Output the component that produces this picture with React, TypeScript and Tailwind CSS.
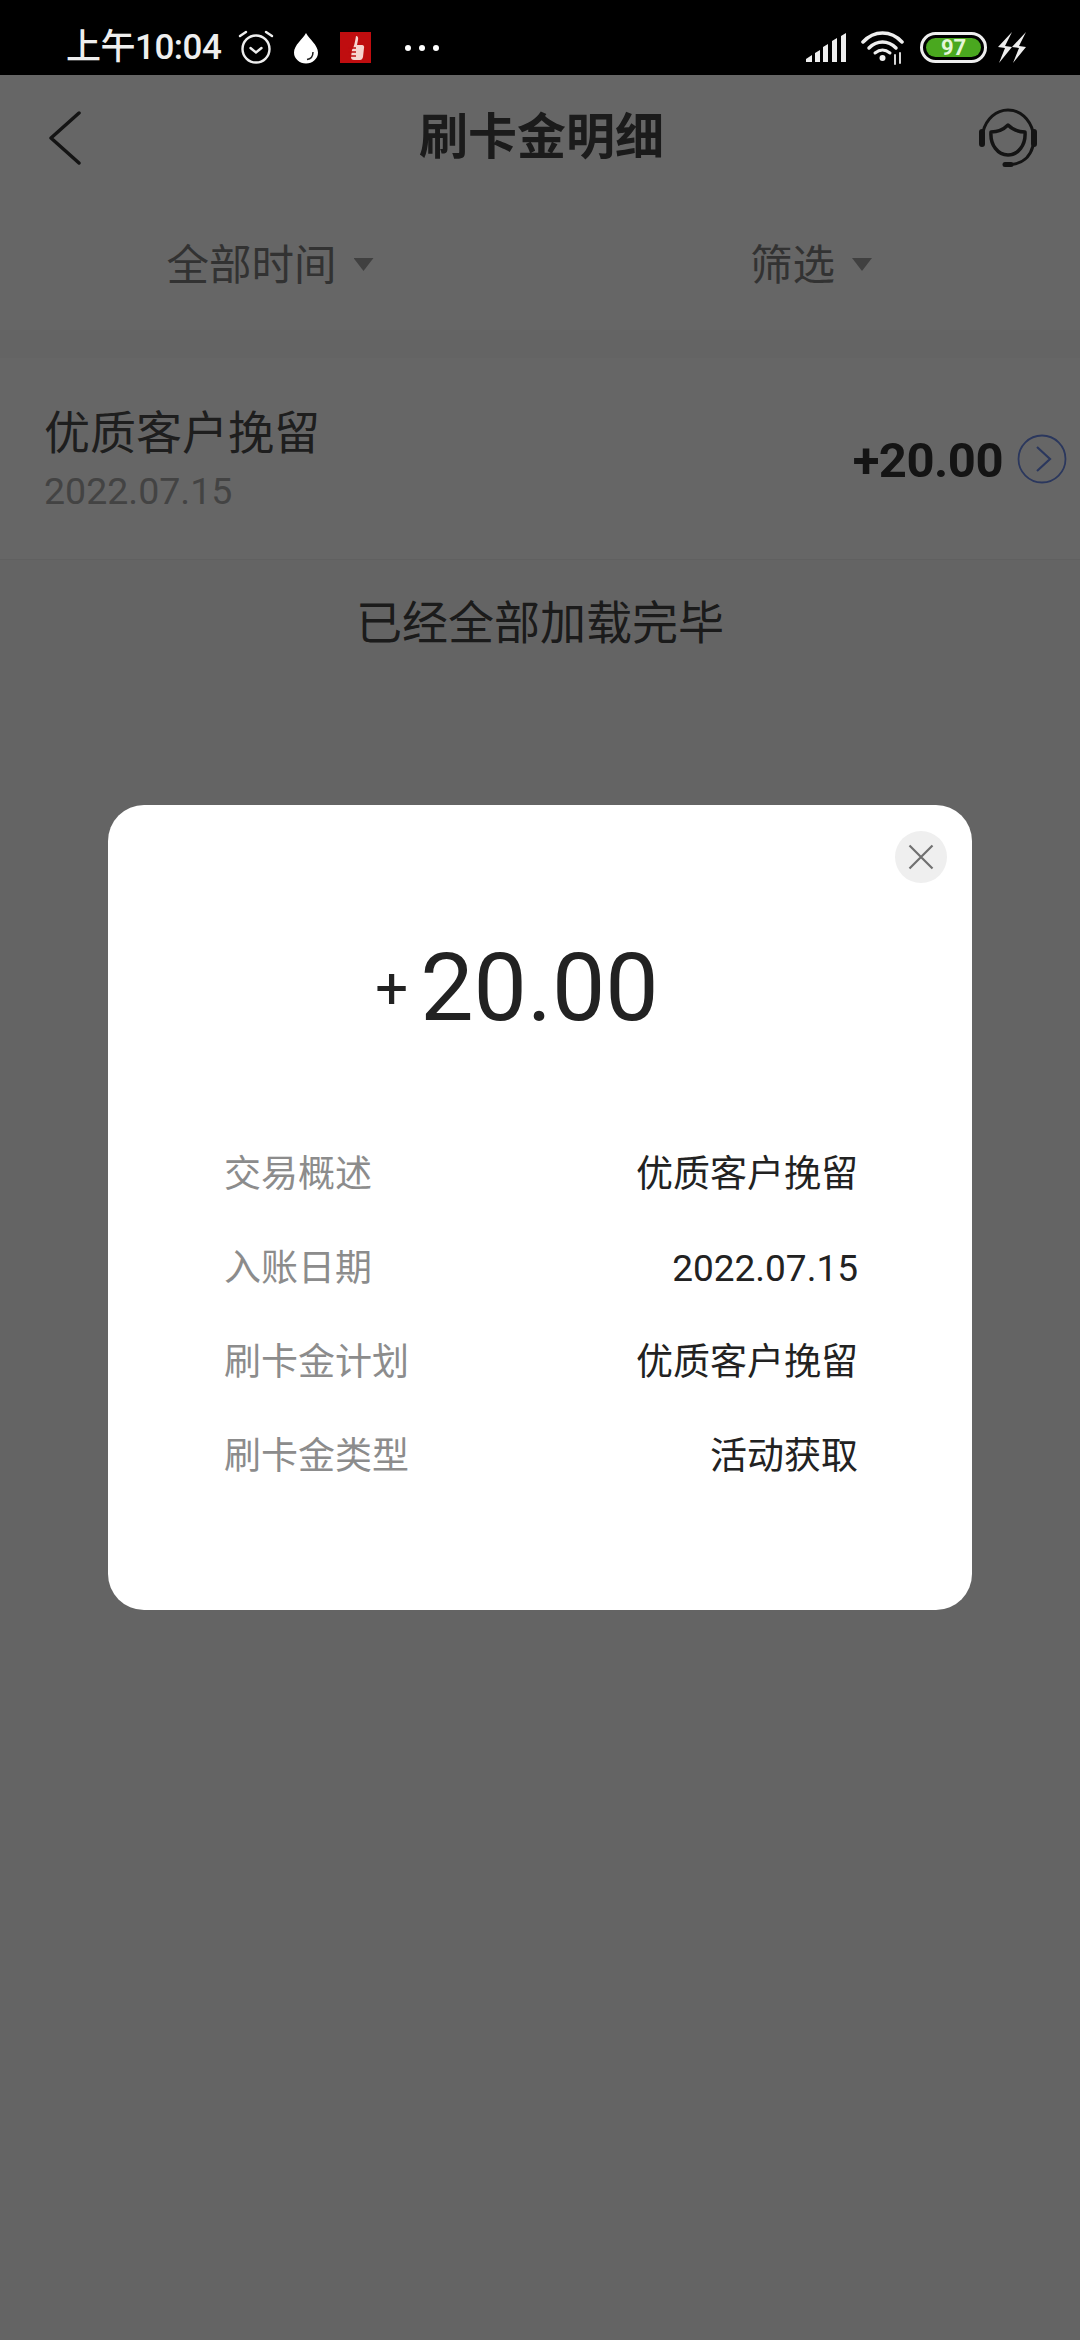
const cjk = "font-['Roboto','Noto_Sans_CJK_SC',sans-serif]";

function StatusBar() {
  return (
    <div className="h-[75px] shrink-0 bg-black flex items-center pt-[20px] relative z-10 text-[#eeeeee]">
      <span className="ml-[66px] w-[158px] text-[35px] leading-[40px] font-medium tracking-[-0.5px] whitespace-nowrap">上午10:04</span>
      <svg className="ml-[14px] mt-[-2px]" width="36" height="36" viewBox="0 0 36 36" fill="none" stroke="#eee" strokeWidth="2.4">
        <circle cx="18" cy="20" r="13.5" />
        <path d="M12.5 19l5.5 4.5 5.5-4.5" strokeLinecap="round" />
        <path d="M2 7l6-4M34 7l-6-4" strokeLinecap="round" />
      </svg>
      <svg className="ml-[19px]" width="26" height="32" viewBox="0 0 26 32">
        <path d="M13 1C16 7 25 13 25 20.500A12 11 0 0 1 1 20.500C1 13 10 7 13 1Z" fill="#fff" />
        <path d="M20 20c0 4-2 7-6 7.500" fill="none" stroke="#222" strokeWidth="1.500" />
      </svg>
      <div className="ml-[21px] w-[31px] h-[31px] bg-[#bf0d0f] flex items-center justify-center">
        <svg width="20" height="26" viewBox="0 0 20 26" fill="#f6d5d0">
          <path d="M10 1c2 0 2.500 2 2 4l-1 5h5c2 0 2.500 2 2 3l-1 9c-.5 2-1.500 3-3 3H8c-2 0-3-1-3-3l1-7c2-3 3-8 4-14Z" />
          <path d="M2 13h8M2 17h8M3 21h7" stroke="#bf0d0f" strokeWidth="1.500" />
        </svg>
      </div>
      <div className="ml-[34px] flex gap-[8px]">
        <div className="w-[6px] h-[6px] rounded-full bg-white" />
        <div className="w-[6px] h-[6px] rounded-full bg-white" />
        <div className="w-[6px] h-[6px] rounded-full bg-white" />
      </div>
      <div className="flex-1" />
      <svg width="42" height="30" viewBox="0 0 42 30" fill="#eee">
        <path d="M1 29v-3l6-4v7zM10 29V20l5-3v12zM18 29V14l5-3v18zM27 29V8l5-3v24zM36 29V3l5-3v29z" />
      </svg>
      <svg className="ml-[14px]" width="44" height="34" viewBox="0 0 44 34" fill="none" stroke="#eee" strokeLinecap="round">
        <path d="M2 11C13 -1 30 -1 41 11" strokeWidth="3.500" />
        <path d="M8 17c8-8 19-8 27 0" strokeWidth="3.500" />
        <path d="M14 22c5-4 10-4 15 0" strokeWidth="3" />
        <circle cx="21.500" cy="27" r="3" fill="#eee" stroke="none" />
        <path d="M34 24v9M39 22v10" strokeWidth="1.800" />
      </svg>
      <div className="ml-[15px] w-[67px] h-[31px] rounded-full border-[3px] border-[#eeeeee] p-[3px] flex">
        <div className="flex-1 rounded-full bg-[#4aa81f] flex items-center justify-center text-[#e4f5d8] text-[22px] leading-none font-bold">97</div>
      </div>
      <svg className="ml-[10px] mr-[53px]" width="30" height="31" viewBox="0 0 30 31" fill="#eee">
        <path d="M15 0L1 15l7 1-6 15 13-16-7-1zM29 0L15 15l7 1-6 15 13-16-7-1z" />
      </svg>
    </div>
  );
}

function Caret() {
  return <div className="w-[20px] h-[13px] ml-[17px] mb-[2px] bg-[#a0a0a0] [clip-path:polygon(0_0,100%_0,50%_100%)]" />;
}

function Header() {
  return (
    <div className="bg-white">
      <div className="h-[126px] grid grid-cols-[1fr_auto_1fr] items-center pl-[49px] pr-[42px]">
        <svg width="32" height="54" viewBox="0 0 32 54" fill="none" stroke="#333" strokeWidth="3.500" strokeLinecap="round" strokeLinejoin="round">
          <path d="M30 2L2 27l28 25" />
        </svg>
        <h1 className="text-[49px] leading-[60px] font-bold text-[#444444] ml-[-4px]">刷卡金明细</h1>
        <svg className="justify-self-end" width="60" height="60" viewBox="0 0 60 60" fill="none" stroke="#333" strokeWidth="3" strokeLinecap="round" strokeLinejoin="round">
          <path d="M5 24C8 11 18 2 30 2s22 9 25 22" />
          <path d="M13 24c7 0 12-2 17-7 5 5 10 7 17 7 1 13-7 23-17 23S12 37 13 24Z" strokeWidth="3.500" />
          <path d="M4 24v12M56 24v12" strokeWidth="6" />
          <path d="M55 38c-3 11-11 18-22 18.500" />
          <path d="M27 56.500h6" strokeWidth="5" />
        </svg>
      </div>
      <div className="h-[129px] flex text-[42.500px] text-[#7e7e7e]">
        <div className="w-1/2 flex items-center justify-center"><span>全部时间</span><Caret /></div>
        <div className="w-1/2 flex items-center justify-center pl-[2px]"><span>筛选</span><Caret /></div>
      </div>
    </div>
  );
}

function Row() {
  return (
    <div className="mt-[28px] bg-white h-[202px] pl-[44px] pr-[13px] flex items-center justify-between border-b border-[#f0f0f0]">
      <div className="flex flex-col">
        <span className="text-[46px] leading-[60px] text-[#4c4c4c] mt-[-2px]">优质客户挽留</span>
        <span className="text-[37.500px] leading-[44px] text-[#a8a8a8] mt-[6px]">2022.07.15</span>
      </div>
      <div className="flex items-center">
        <span className="text-[49px] leading-[60px] mt-[4px] font-bold text-[#333333] tracking-[-0.5px]">+20.00</span>
        <svg className="ml-[14px]" width="50" height="50" viewBox="0 0 50 50" fill="none" stroke="#6b8be8" strokeWidth="1.800">
          <circle cx="25" cy="25" r="23.500" />
          <path d="M20 13l13 12-13 12" strokeWidth="2.200" />
        </svg>
      </div>
    </div>
  );
}

function DetailRow({ label, value }: { label: string; value: string }) {
  return (
    <div className="h-[94px] flex items-center justify-between">
      <span className="text-[#8c8c8c]">{label}</span>
      <span className="text-[#222222]">{value}</span>
    </div>
  );
}

function Modal() {
  return (
    <div className="relative w-[864px] h-[805px] bg-white rounded-[36px] flex flex-col items-center">
      <button className="absolute top-[26px] right-[25px] w-[52px] h-[52px] rounded-full bg-[#efefef] flex items-center justify-center">
        <svg width="26" height="26" viewBox="0 0 26 26" stroke="#707070" strokeWidth="2.200" fill="none">
          <path d="M1.500 1.500l23 23M24.500 1.500l-23 23" />
        </svg>
      </button>
      <div className="mt-[125px] mr-[46px] flex items-center text-[#222222]">
        <span className="text-[58px] leading-none mr-[12px]">+</span>
        <span className="text-[95px] leading-[116px]">20.00</span>
      </div>
      <div className="mt-[82px] w-full pl-[116px] pr-[114px] text-[37px]">
        <DetailRow label="交易概述" value="优质客户挽留" />
        <DetailRow label="入账日期" value="2022.07.15" />
        <DetailRow label="刷卡金计划" value="优质客户挽留" />
        <DetailRow label="刷卡金类型" value="活动获取" />
      </div>
    </div>
  );
}

export default function App() {
  return (
    <div className={`relative w-[1080px] h-[2340px] overflow-hidden bg-[#fbfbfb] flex flex-col ${cjk}`}>
      <StatusBar />
      <Header />
      <Row />
      <div className="mt-[33px] text-center text-[46px] leading-[60px] text-[#444444]">已经全部加载完毕</div>
      <div className="absolute inset-x-0 top-[75px] bottom-0 bg-black/60 flex items-center justify-center">
        <Modal />
      </div>
    </div>
  );
}
